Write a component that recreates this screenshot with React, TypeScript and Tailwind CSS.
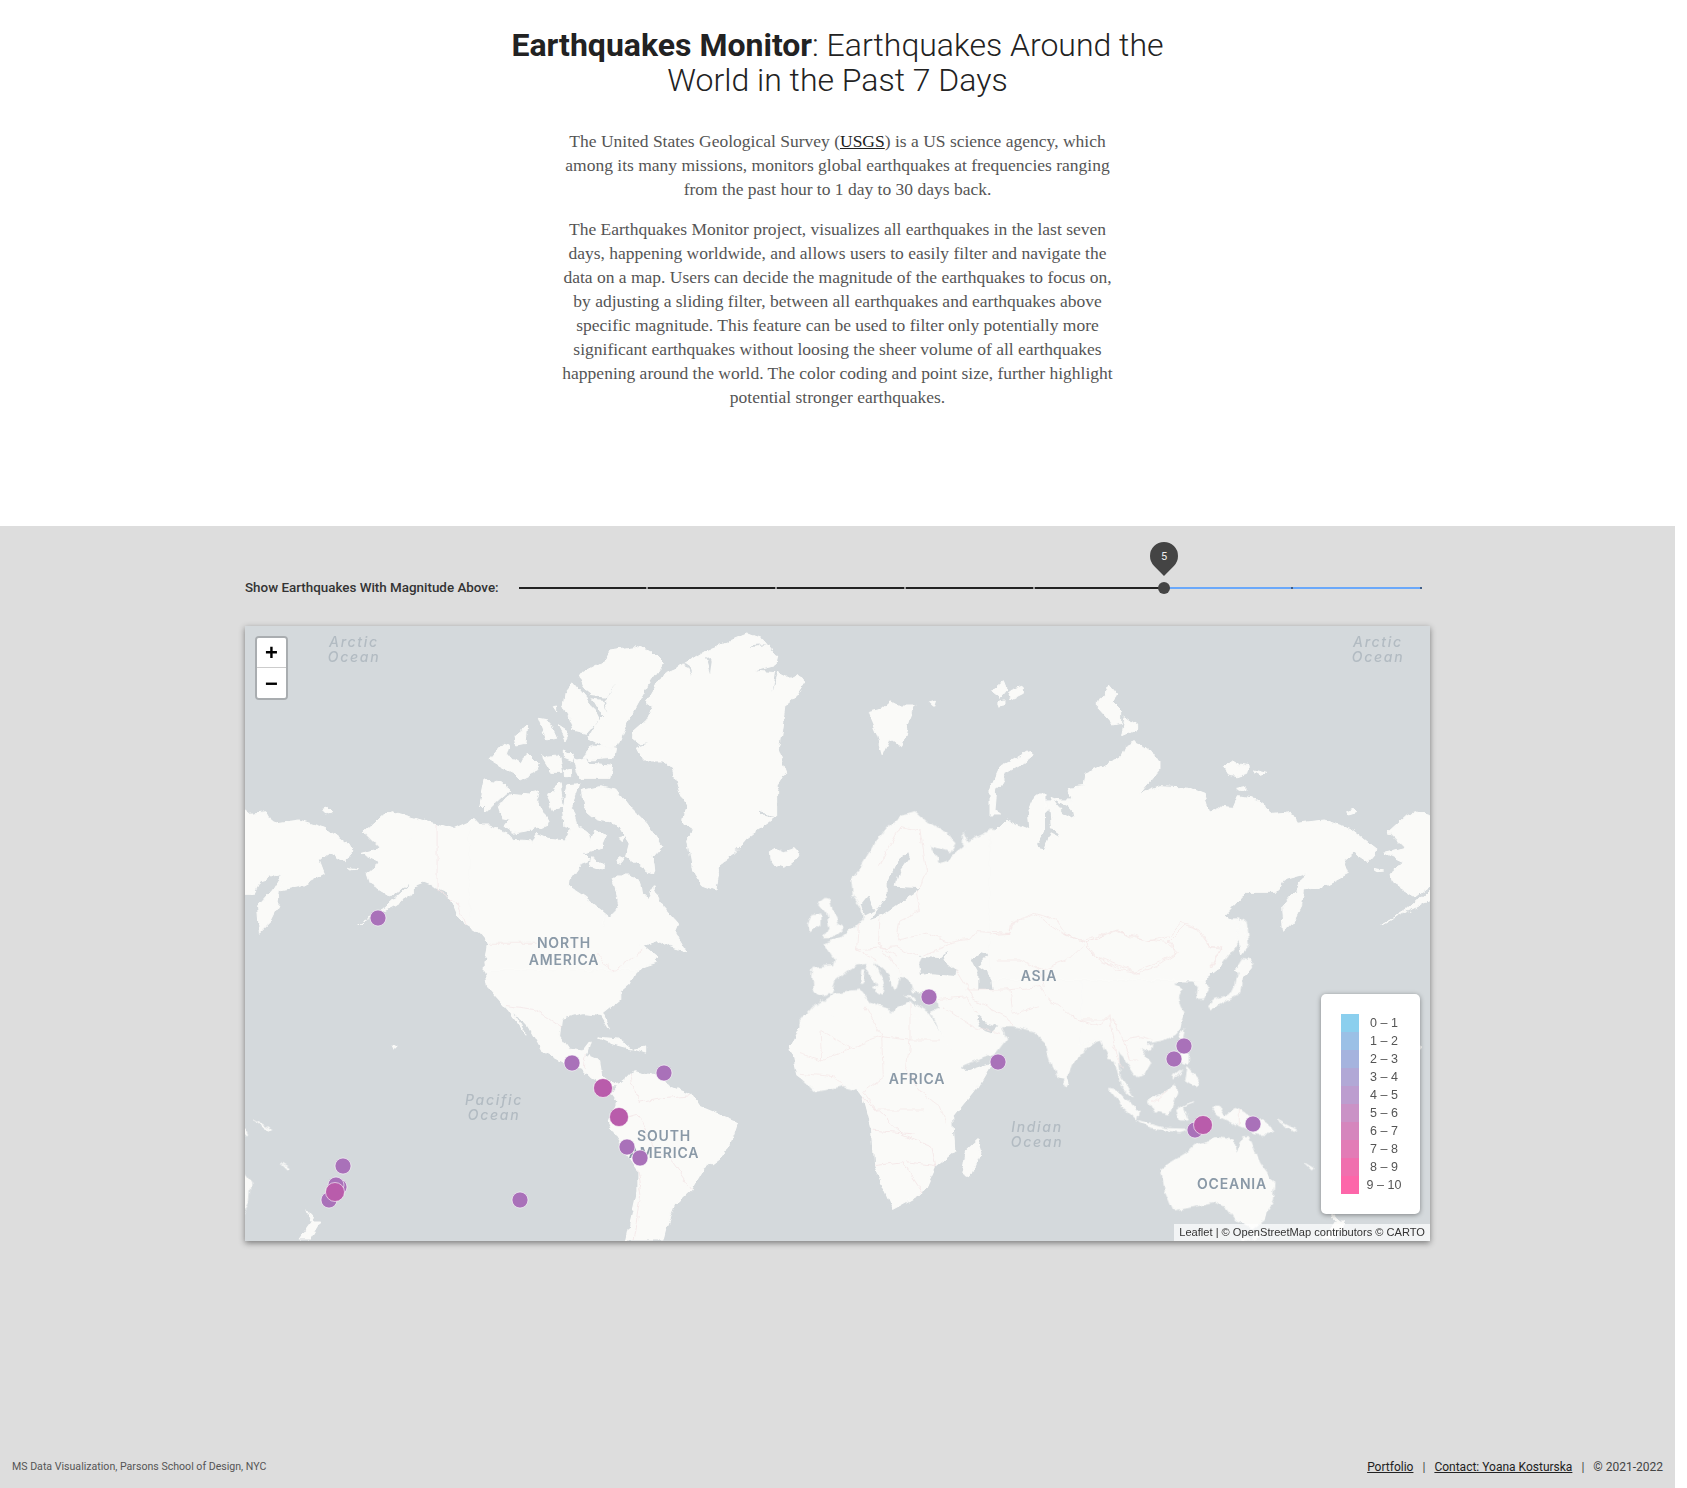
import React from 'react';

type Tile = { transform: string; land: string[]; water?: string[]; borders?: string[] };

// coastlines traced by hand; each tile has its own grid so the numbers stay readable
const tiles: Tile[] = [
  {
    // the Americas
    transform: 'translate(240 620) scale(0.38265 0.39541)',
    land: [
      'M440 560 L470 510 L515 515 L560 530 L601 512 L900 700 L1090 850 L1040 880 L1020 920 L995 940 L995 960 L950 995 L968 1035 L945 1000 L900 995 L840 1010 L835 1050 L860 1085 L895 1090 L915 1065 L905 1100 L940 1115 L945 1150 L985 1180 L960 1180 L920 1160 L890 1130 L850 1120 L790 1090 L755 1030 L712 985 L750 1052 L700 985 L650 930 L640 870 L650 820 L625 790 L575 760 L545 690 L480 665 L440 680 Z',
      'M985 1180 L1010 1160 L1030 1140 L1080 1150 L1130 1180 L1180 1200 L1200 1230 L1300 1270 L1290 1300 L1265 1350 L1210 1390 L1180 1440 L1135 1480 L1115 1530 L1105 1568 L1010 1568 L1040 1440 L1040 1390 L985 1310 L965 1270 L985 1220 L970 1200 Z',
      'M935 1055 L990 1060 L1025 1085 L975 1072 Z',
      'M1030 1085 L1060 1080 L1060 1095 Z',
      'M155 1568 L190 1520 L210 1520 L180 1568 Z',
      'M175 1495 L195 1520 L185 1520 Z',
      'M400 1075 L410 1080 L405 1085 Z',
    ],
    borders: [
      'M515 515 L515 680 L570 720 L590 770',
      'M695 975 L770 985 L840 1030',
      'M905 1095 L900 1130',
      'M1020 1150 L1040 1220 L1090 1210 L1180 1200',
      'M970 1270 L1040 1250 L1080 1330 L1130 1370 L1180 1440',
      'M1040 1390 L1050 1450 L1030 1568',
    ],
  },
  {
    // Canadian arctic, Greenland, Iceland
    transform: 'translate(470 630) scale(0.33333)',
    land: [
      'M0 575 L12 565 L30 585 L60 585 L120 615 L125 625 L180 630 L185 645 L200 610 L240 625 L285 630 L300 600 L330 590 L355 610 L360 635 L375 595 L410 620 L395 655 L370 660 L340 670 L360 690 L335 700 L320 720 L300 750 L295 790 L315 825 L380 850 L405 860 L405 890 L425 908 L430 880 L420 860 L450 830 L440 780 L430 745 L440 735 L480 735 L510 760 L515 795 L530 805 L550 770 L580 830 L625 880 L615 905 L650 965 L600 950 L570 930 L510 950 L540 975 L560 1000 L500 1020 L45 1020 L56 942 L27 900 L0 860 Z',
      'M340 480 L385 470 L440 480 L470 520 L530 580 L575 650 L550 680 L555 730 L530 720 L500 700 L470 680 L480 640 L450 590 L415 575 L380 570 L350 545 Z',
      'M365 680 L410 705 L395 720 L360 710 Z',
      'M445 680 L465 685 L455 700 L440 695 Z',
      'M445 620 L465 615 L460 635 Z',
      'M30 525 L45 450 L90 455 L120 480 L85 510 L50 545 Z',
      'M85 530 L120 490 L180 495 L190 485 L210 480 L200 510 L235 580 L185 600 L130 610 L100 590 L120 565 L95 560 Z',
      'M230 495 L270 460 L280 530 L250 540 Z',
      'M290 465 L330 460 L305 530 L325 600 L285 590 L280 540 Z',
      'M320 390 L345 385 L360 400 L425 405 L420 445 L330 445 L310 385 Z',
      'M57 390 L100 340 L115 345 L105 380 L135 385 L150 395 L175 370 L205 400 L190 430 L150 450 L130 430 L90 410 Z',
      'M215 380 L265 375 L275 430 L245 430 Z',
      'M280 360 L310 375 L305 395 L280 385 Z',
      'M280 420 L305 415 L305 440 L280 440 Z',
      'M135 320 L170 290 L165 340 L140 345 Z',
      'M205 265 L235 270 L260 325 L230 330 Z',
      'M265 290 L295 310 L285 330 Z',
      'M285 190 L310 160 L360 220 L385 270 L350 310 L310 300 L295 260 L280 230 Z',
      'M325 135 L400 95 L420 60 L490 50 L545 65 L580 100 L530 170 L480 260 L465 295 L440 350 L410 350 L355 320 L380 280 L400 260 L370 210 L340 170 Z',
      'M340 380 L370 345 L440 355 L435 385 L360 390 Z',
      'M485 310 L530 270 L550 230 L530 215 L580 130 L650 100 L715 60 L775 35 L830 12 L880 30 L920 80 L915 105 L850 120 L920 125 L960 145 L985 130 L1005 155 L975 200 L945 225 L935 300 L925 360 L950 430 L920 480 L920 560 L850 610 L830 625 L790 670 L750 700 L735 780 L695 765 L665 720 L650 630 L670 600 L640 580 L650 530 L630 490 L610 420 L580 390 L520 390 L500 350 L510 340 L485 320 Z',
      'M898 665 L915 655 L940 665 L975 655 L988 680 L945 715 L915 705 L900 685 Z',
      'M250 230 L260 228 L260 245 Z',
    ],
    water: [
      'M645 100 L665 135 L655 100 Z',
      'M705 80 L720 130 L725 95 Z',
      'M905 185 L925 122 L915 125 Z',
      'M850 45 L890 42 L850 52 Z',
      'M340 175 L365 205 L400 210 L440 160 L405 200 L365 195 Z',
      'M400 210 L415 245 L405 210 Z',
      'M500 345 L535 340 L505 350 Z',
      'M870 545 L915 565 L870 555 Z',
    ],
    borders: ['M60 940 L200 940', 'M385 970 L400 1000 L430 1020 L480 990 L520 960'],
  },
  {
    // Europe, middle east, north Africa
    transform: 'translate(800 800) scale(0.33333)',
    land: [
      'M38 505 L100 500 L105 480 L75 430 L125 415 L175 370 L190 360 L185 310 L200 345 L160 285 L155 235 L180 205 L225 130 L260 85 L310 45 L345 35 L385 70 L440 100 L465 130 L450 155 L420 145 L390 135 L415 190 L440 180 L490 140 L490 95 L505 130 L530 110 L570 90 L615 95 L630 80 L690 90 L690 40 L700 0 L1020 0 L1020 740 L930 740 L920 720 L895 720 L860 745 L815 790 L795 840 L770 830 L735 725 L700 695 L640 680 L600 680 L620 715 L590 755 L480 800 L430 720 L395 635 L415 625 L405 575 L340 575 L330 545 L300 530 L285 575 L270 530 L220 480 L250 555 L235 565 L195 490 L170 495 L140 515 L105 545 L95 575 L65 585 L40 570 L35 530 Z',
      'M0 665 L40 620 L100 580 L180 570 L210 610 L275 635 L330 605 L390 640 L420 720 L470 795 L490 820 L550 815 L510 880 L450 960 L460 1020 L230 1020 L195 900 L190 875 L130 860 L45 875 L0 830 Z',
      'M75 295 L90 300 L110 370 L130 385 L100 410 L70 410 L90 380 L80 340 L55 310 Z',
      'M35 350 L60 345 L60 375 L30 395 L25 370 Z',
      'M185 510 L195 510 L190 550 L183 550 Z',
      'M220 565 L250 560 L245 580 Z',
      'M315 590 L345 590 L345 597 Z',
      'M795 825 L810 850 L800 860 L793 850 Z',
    ],
    water: [
      'M355 500 L365 470 L420 475 L430 465 L445 455 L430 480 L470 510 L465 525 L400 520 L360 525 Z',
      'M515 480 L545 460 L565 465 L535 500 L570 525 L575 570 L535 570 L535 520 Z',
      'M260 250 L290 185 L325 160 L330 175 L300 215 L290 260 L360 265 L320 290 L300 310 L250 345 L210 360 L225 340 L260 290 Z',
      'M185 310 L205 285 L225 330 L195 345 Z',
      'M525 645 L555 670 L595 680 L575 700 L545 690 Z',
    ],
    borders: [
      'M60 690 L150 745 L245 710 L330 720 L420 720',
      'M330 610 L330 720',
      'M195 620 L245 710 L250 830 L190 875',
      'M330 720 L320 800 L355 870 L420 920 L440 970',
      'M60 690 L65 780',
      'M0 760 L65 780 L150 745',
      'M0 820 L100 830 L130 860',
      'M190 875 L230 930 L370 930',
      'M175 370 L170 450 L230 480',
      'M240 355 L235 430 L290 470',
      'M300 360 L290 420 L380 400 L455 430 L370 465',
      'M170 450 L290 440 L360 470',
      'M300 80 L360 90 L380 210 L350 280 L360 330 L300 360',
      'M235 200 L300 80',
      'M235 430 L300 520',
      'M455 430 L510 420 L530 395 L630 400 L640 365 L710 345 L790 400 L850 425 L950 395 L1020 410',
      'M590 480 L660 480 L720 510 L800 480 L850 430',
      'M850 430 L890 470 L1020 520',
      'M470 510 L500 560 L520 600 L620 650 L640 680',
      'M500 570 L620 570 L720 560 L740 590 L780 620 L810 650 L900 680 L930 650 L950 760',
      'M630 570 L640 640 L720 620',
      'M720 510 L730 560',
      'M400 600 L500 590 L530 640',
      'M430 620 L520 680 L600 700',
    ],
  },
  {
    // east Asia, Indonesia, Australia
    transform: 'translate(1080 920) scale(0.33333)',
    land: [
      'M0 0 L480 0 L480 60 L430 130 L410 145 L370 165 L385 205 L375 235 L350 235 L355 200 L340 180 L310 170 L280 190 L310 205 L295 235 L315 285 L290 340 L250 360 L200 370 L205 395 L175 380 L210 430 L190 465 L170 470 L130 410 L115 395 L120 470 L160 530 L125 500 L105 420 L85 415 L60 360 L0 375 Z',
      'M480 10 L495 0 L505 70 L490 90 Z',
      'M470 150 L490 118 L515 130 L495 160 L480 155 Z',
      'M383 255 L400 240 L450 225 L465 195 L470 165 L485 170 L480 220 L440 240 L390 270 Z',
      'M300 340 L315 330 L310 355 Z',
      'M200 380 L218 375 L215 392 L203 392 Z',
      'M300 365 L325 395 L325 430 L300 420 Z',
      'M320 440 L355 480 L345 500 L315 480 Z',
      'M280 470 L305 450 L280 480 Z',
      'M205 540 L250 520 L285 495 L290 520 L265 585 L225 575 Z',
      'M85 505 L115 510 L175 575 L170 600 L130 565 Z',
      'M175 602 L255 625 L320 628 L300 635 L215 625 Z',
      'M290 570 L335 545 L310 560 L325 600 L300 600 Z',
      'M395 565 L420 565 L435 590 L465 565 L520 590 L560 610 L575 640 L530 640 L480 620 L440 600 L410 585 Z',
      'M595 600 L650 630 L640 635 Z',
      'M675 730 L700 745 L695 750 Z',
      'M245 745 L320 700 L345 675 L410 655 L460 665 L470 700 L485 650 L505 650 L540 730 L585 790 L580 840 L550 900 L520 925 L470 900 L440 860 L400 845 L340 860 L280 870 L255 810 Z',
      'M480 945 L510 955 L490 965 Z',
    ],
    borders: [
      'M0 60 L110 30 L190 60 L260 70 L320 10 L360 30 L390 80 L420 85 L390 145',
      'M40 90 L60 125 L160 155 L240 125 L295 95 L265 70',
      'M0 300 L100 300 L115 330 L130 360 L185 350 L220 360',
      'M130 360 L150 420 L175 420',
      'M100 380 L130 450',
      'M478 570 L478 620',
      'M220 545 L265 510',
    ],
  },
  {
    // Siberia, and Alaska where the map wraps round
    transform: 'translate(990 680) scale(0.33333)',
    land: [
      'M0 465 L45 420 L120 450 L115 400 L135 345 L165 345 L165 400 L185 350 L250 375 L235 325 L280 320 L285 280 L390 235 L405 200 L435 185 L510 240 L510 270 L445 345 L510 320 L600 325 L640 340 L660 400 L680 380 L730 385 L745 350 L800 360 L850 400 L900 395 L920 430 L1000 420 L1080 445 L1165 510 L1135 545 L1090 515 L1060 540 L1075 580 L1000 620 L940 630 L950 580 L880 600 L860 640 L765 640 L700 710 L745 730 L750 770 L690 860 L640 900 L0 900 Z',
      'M950 580 L920 630 L875 680 L880 760 L910 730 L935 680 L940 630 Z',
      'M755 720 L770 790 L755 825 L745 770 Z',
      'M740 870 L775 835 L785 860 L750 900 Z',
      'M1190 460 L1250 405 L1280 395 L1400 430 L1400 600 L1340 600 L1275 650 L1210 610 L1200 580 L1240 545 L1185 520 L1245 505 L1200 460 Z',
      'M1175 735 L1250 690 L1320 625 L1345 610 L1345 640 L1280 680 L1210 715 Z',
      'M0 325 L30 260 L70 240 L115 212 L130 225 L100 250 L50 280 L20 330 L15 390 L35 405 L0 405 Z',
      'M325 65 L355 15 L380 45 L370 70 L395 95 L395 130 L370 135 L325 85 Z',
      'M405 110 L440 135 L440 150 L395 170 Z',
      'M700 260 L725 240 L750 255 L775 260 L770 280 L740 290 L715 285 Z',
      'M790 270 L830 280 L815 288 Z',
      'M740 325 L765 320 L765 335 Z',
      'M1070 392 L1090 385 L1100 395 L1075 402 Z',
      'M5 35 L40 5 L50 30 L30 55 Z',
      'M50 40 L100 20 L100 40 L60 60 Z',
      'M20 65 L45 60 L45 75 L25 78 Z',
      'M1150 565 L1175 570 L1160 572 Z',
    ],
    water: [
      'M165 400 L165 450 L135 500 L160 505 L180 460 L210 475 L200 450 L180 445 L175 390 Z',
      'M190 360 L215 395 L250 415 L245 390 L200 365 Z',
    ],
    borders: [
      'M0 765 L60 760 L65 725 L135 700 L200 720 L230 765 L285 785 L340 765 L385 750 L420 770 L480 785 L530 775 L570 730 L620 745 L660 800 L690 800 L660 860',
      'M285 785 L320 830 L380 870 L440 880 L500 860 L560 820 L535 780',
    ],
  },
  {
    // rest of Africa and the smaller islands, read off the wider crop
    transform: 'translate(780 620) scale(0.42092 0.39541)',
    land: [
      'M25 1080 L40 1150 L90 1190 L170 1170 L200 1210 L220 1290 L225 1380 L270 1490 L340 1450 L370 1380 L415 1340 L410 1260 L470 1180 L500 1125 L440 1145 L360 1010 L60 1000 Z',
      'M470 1315 L478 1340 L450 1410 L430 1400 L440 1345 Z',
      'M210 235 L240 225 L262 205 L280 215 L320 215 L305 255 L290 320 L262 300 L245 340 L232 290 Z',
      'M355 210 L370 205 L365 220 Z',
      'M1120 1545 L1140 1560 L1125 1568 Z',
    ],
    borders: [
      'M200 1210 L290 1300 L360 1330',
      'M225 1380 L290 1370 L340 1450',
      'M220 1290 L320 1300',
      'M360 1330 L370 1380 L300 1370',
    ],
  },
];

type Pin = { x: number; y: number; big?: boolean };

const pins: Pin[] = [
  { x: 378, y: 918 },
  { x: 572, y: 1063 },
  { x: 664, y: 1073 },
  { x: 603, y: 1088, big: true },
  { x: 619, y: 1117, big: true },
  { x: 627, y: 1147 },
  { x: 640, y: 1158 },
  { x: 343, y: 1166 },
  { x: 339, y: 1187 },
  { x: 336, y: 1185 },
  { x: 329, y: 1200 },
  { x: 335, y: 1192, big: true },
  { x: 520, y: 1200 },
  { x: 929, y: 997 },
  { x: 998, y: 1062 },
  { x: 1184, y: 1046 },
  { x: 1174, y: 1059 },
  { x: 1195, y: 1130 },
  { x: 1203, y: 1125, big: true },
  { x: 1253, y: 1124 },
];

const continents = [
  { text: 'NORTH', x: 564, y: 942 },
  { text: 'AMERICA', x: 564, y: 959 },
  { text: 'SOUTH', x: 664, y: 1135 },
  { text: 'AMERICA', x: 664, y: 1152 },
  { text: 'ASIA', x: 1039, y: 975 },
  { text: 'AFRICA', x: 917, y: 1078 },
  { text: 'OCEANIA', x: 1232, y: 1183 },
];

const oceans = [
  { text: 'Arctic', x: 354, y: 641 },
  { text: 'Ocean', x: 354, y: 656 },
  { text: 'Arctic', x: 1378, y: 641 },
  { text: 'Ocean', x: 1378, y: 656 },
  { text: 'Pacific', x: 494, y: 1099 },
  { text: 'Ocean', x: 494, y: 1114 },
  { text: 'Indian', x: 1037, y: 1126 },
  { text: 'Ocean', x: 1037, y: 1141 },
];

const legend = [
  { label: '0 – 1', color: 'bg-[#8bcfee]' },
  { label: '1 – 2', color: 'bg-[#9bc0e6]' },
  { label: '2 – 3', color: 'bg-[#a5b3de]' },
  { label: '3 – 4', color: 'bg-[#b1a8d6]' },
  { label: '4 – 5', color: 'bg-[#bc9dcf]' },
  { label: '5 – 6', color: 'bg-[#ca92c6]' },
  { label: '6 – 7', color: 'bg-[#d586bd]' },
  { label: '7 – 8', color: 'bg-[#e27cb6]' },
  { label: '8 – 9', color: 'bg-[#f06fae]' },
  { label: '9 – 10', color: 'bg-[#fd66a9]' },
];

function Land() {
  return (
    <>
      {tiles.map((t, i) => (
        <g key={i} transform={t.transform}>
          {t.land.map((d, j) => (
            <path key={j} d={d} fill="#fafaf8" stroke="#fafaf8" strokeWidth="3" strokeLinejoin="round" />
          ))}
        </g>
      ))}
      {tiles.map((t, i) => (
        <g key={i} transform={t.transform}>
          {t.water?.map((d, j) => (
            <path key={j} d={d} fill="#d4d9dc" />
          ))}
          {t.borders?.map((d, j) => (
            <path key={j} d={d} fill="none" stroke="#f4e5e6" strokeWidth="2" />
          ))}
        </g>
      ))}
    </>
  );
}

function WorldMap() {
  return (
    <svg viewBox="245 626 1185 615" className="block w-full h-full">
      <defs>
        {/* roughens the straight traced edges into something like a coastline */}
        <filter id="coast" filterUnits="userSpaceOnUse" x="245" y="626" width="1185" height="615">
          <feTurbulence type="fractalNoise" baseFrequency="0.09" numOctaves="3" seed="4" />
          <feDisplacementMap in="SourceGraphic" scale="7" xChannelSelector="R" yChannelSelector="G" />
        </filter>
      </defs>
      <rect x="245" y="626" width="1185" height="615" fill="#d4d9dc" />
      <g filter="url(#coast)">
        {/* the map is wider than one world, so the edges show the other side again */}
        <g transform="translate(-1024 0)">
          <Land />
        </g>
        <g transform="translate(1024 0)">
          <Land />
        </g>
        <Land />
      </g>
      {continents.map((c, i) => (
        <text
          key={i}
          x={c.x}
          y={c.y}
          textAnchor="middle"
          dominantBaseline="central"
          fill="#8a99a7"
          className="text-[14px] font-semibold tracking-[0.8px] font-['Inter',sans-serif]"
        >
          {c.text}
        </text>
      ))}
      {oceans.map((o, i) => (
        <text
          key={i}
          x={o.x}
          y={o.y}
          textAnchor="middle"
          dominantBaseline="central"
          fill="#b2bbc2"
          className="text-[14px] italic font-medium tracking-[1.7px] font-['Inter',sans-serif]"
        >
          {o.text}
        </text>
      ))}
      {pins.map((p, i) => (
        <circle
          key={i}
          cx={p.x}
          cy={p.y}
          r={p.big ? 9.5 : 8}
          fill={p.big ? '#b95cab' : '#a971b9'}
          stroke="#ffffff"
          strokeOpacity="0.6"
          strokeWidth="1"
        />
      ))}
    </svg>
  );
}

function MagnitudeSlider() {
  const steps = [0, 1, 2, 3, 4, 5, 6];
  return (
    <div className="relative w-[905px] h-[2px] flex">
      {steps.map((s) => (
        <div
          key={s}
          className={`w-[129px] h-[2px] border-r-2 ${
            s < 5 ? 'bg-[#222222] border-[#9a9a9a]' : 'bg-[#6aa8fa] border-[#3f5f8a]'
          }`}
        />
      ))}
      {/* thumb + value pin */}
      <div className="absolute left-[639px] top-[-5px] w-3 h-3 rounded-full bg-[#444444]" />
      <svg viewBox="0 0 28 34" className="absolute left-[631px] top-[-45px] w-7 h-[34px]">
        <path d="M14 34 L4.1 23.9 A14 14 0 1 1 23.9 23.9 Z" fill="#444444" />
        <text x="14" y="14" textAnchor="middle" dominantBaseline="central" fill="#eeeeee" className="text-[11px] font-['Roboto',sans-serif]">
          5
        </text>
      </svg>
    </div>
  );
}

export default function App() {
  return (
    <div className="w-[1675px] min-h-[1488px] flex flex-col font-['Roboto',sans-serif] bg-white">
      <header className="h-[526px] pt-[28px] flex flex-col items-center">
        <h1 className="text-[32px] leading-[35px] text-center text-[#222222] font-light">
          <span className="font-bold">Earthquakes Monitor</span>: Earthquakes Around the
          <br />
          World in the Past 7 Days
        </h1>
        <div className="mt-[31px] text-center text-[17.5px] leading-[24px] text-[#555555] font-['Liberation_Serif',serif]">
          <p>
            The United States Geological Survey (<a href="#" className="underline text-[#222222]">USGS</a>) is a US science agency, which
            <br />
            among its many missions, monitors global earthquakes at frequencies ranging
            <br />
            from the past hour to 1 day to 30 days back.
          </p>
          <p className="mt-4">
            The Earthquakes Monitor project, visualizes all earthquakes in the last seven
            <br />
            days, happening worldwide, and allows users to easily filter and navigate the
            <br />
            data on a map. Users can decide the magnitude of the earthquakes to focus on,
            <br />
            by adjusting a sliding filter, between all earthquakes and earthquakes above
            <br />
            specific magnitude. This feature can be used to filter only potentially more
            <br />
            significant earthquakes without loosing the sheer volume of all earthquakes
            <br />
            happening around the world. The color coding and point size, further highlight
            <br />
            potential stronger earthquakes.
          </p>
        </div>
      </header>

      <main className="flex-1 bg-[#dddddd] flex flex-col">
        <div className="ml-[245px] mt-[54px] h-[16px] flex items-center">
          <span className="w-[274px] text-[13.4px] font-medium text-[#333333]">Show Earthquakes With Magnitude Above:</span>
          <MagnitudeSlider />
        </div>

        <div className="relative ml-[245px] mt-[30px] w-[1185px] h-[615px] shadow-[0_2px_6px_rgba(0,0,0,0.45)]">
          <WorldMap />

          <div className="absolute left-[10px] top-[10px] w-[33px] border-2 border-black/20 rounded-[4px] bg-clip-padding">
            <div className="h-[30px] flex items-center justify-center bg-white rounded-t-[2px] border-b border-[#cccccc] text-[22px] font-bold text-black font-['Liberation_Sans',sans-serif]">+</div>
            <div className="h-[30px] flex items-center justify-center bg-white rounded-b-[2px] text-[22px] font-bold text-black font-['Liberation_Sans',sans-serif]">−</div>
          </div>

          <div className="absolute left-[1076px] top-[368px] w-[99px] h-[220px] bg-white rounded-[5px] shadow-[0_1px_5px_rgba(0,0,0,0.4)] pt-5 pl-5 flex font-['Liberation_Sans',sans-serif] text-[12.5px] text-[#555555]">
            <div className="flex flex-col">
              {legend.map((l) => (
                <div key={l.label} className="flex items-center h-[18px]">
                  <div className={`w-[18px] h-[18px] ${l.color}`} />
                  <span className="w-[50px] text-center">{l.label}</span>
                </div>
              ))}
            </div>
          </div>

          <div className="absolute right-0 bottom-0 h-[17px] px-[5px] bg-white/70 text-[11.1px] leading-[17px] text-[#333333] font-['Liberation_Sans',sans-serif]">
            Leaflet | © OpenStreetMap contributors © CARTO
          </div>
        </div>

        <footer className="mt-auto h-[29px] px-3 flex items-start justify-between">
          <span className="text-[10.6px] leading-[16px] text-[#555555]">MS Data Visualization, Parsons School of Design, NYC</span>
          <span className="text-[12px] leading-[16px] text-[#444444]">
            <a href="#" className="underline text-[#222222]">Portfolio</a>
            <span className="mx-[9px]">|</span>
            <a href="#" className="underline text-[#222222]">Contact: Yoana Kosturska</a>
            <span className="mx-[9px]">|</span>© 2021-2022
          </span>
        </footer>
      </main>
    </div>
  );
}
